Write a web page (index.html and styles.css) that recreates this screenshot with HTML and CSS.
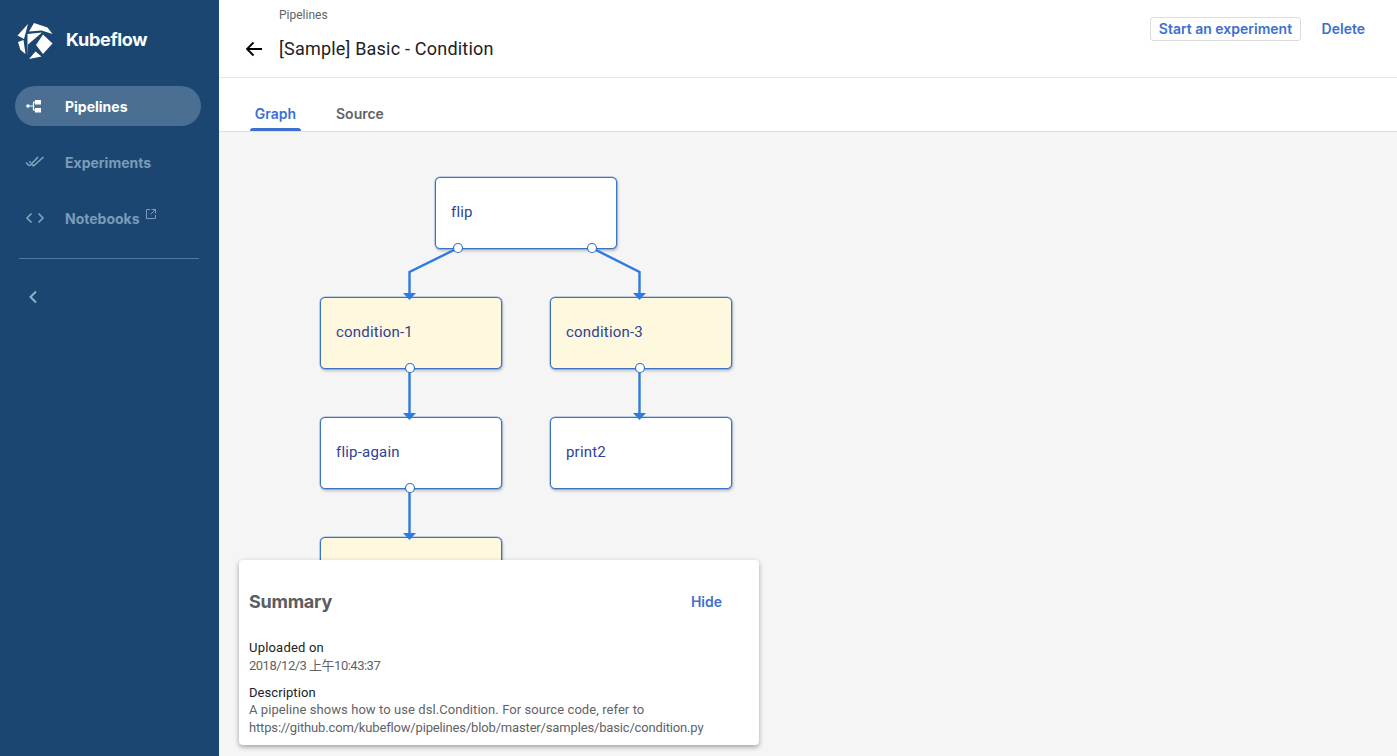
FILE: index.html
```html
<!DOCTYPE html>
<html lang="en">
<head>
<meta charset="utf-8">
<title>Kubeflow Pipelines</title>
<link rel="stylesheet" href="styles.css">
</head>
<body>
<div class="app">
  <aside class="sidebar">
    <div class="brand">
      <svg class="logo" viewBox="0 0 36 36" width="36" height="36">
        <path d="M11 1 0.500 12.500 7 16 Z"/>
        <path d="M17 0 30.500 4.500 35.500 11 24.500 7.500 12 8.500 Z"/>
        <path d="M10.500 11 25 9.500 11 21.500 10.500 33 Z"/>
        <path d="M1 19 6.500 17 8.500 31 3.500 27 Z"/>
        <path d="M26 11.500 35.500 20.500 26 31 19 22 Z"/>
        <path d="M12 36 18.500 28.500 24.500 33.500 Z"/>
      </svg>
      <span class="brand-name">Kubeflow</span>
    </div>
    <nav class="nav">
      <a class="nav-item active">
        <svg class="nav-icon" viewBox="0 0 18 18" width="18" height="18">
          <circle cx="3" cy="9" r="1.800"/>
          <rect x="10" y="3" width="6" height="4.500"/>
          <rect x="10" y="11" width="6" height="4.500"/>
          <path class="line" d="M5 9h3.500M8.500 5.200V13.200M8.500 5.200H10M8.500 13.200H10"/>
        </svg>
        <span>Pipelines</span>
      </a>
      <a class="nav-item">
        <svg class="nav-icon" viewBox="0 0 20 14" width="20" height="14">
          <path class="line" d="M1 7.500l3.500 3.500M5 10.500 13 2M8.500 11 18.500 2M7 9.500 8.500 11M4.300 6.200 5.800 7.700"/>
        </svg>
        <span>Experiments</span>
      </a>
      <a class="nav-item">
        <svg class="nav-icon" viewBox="0 0 20 14" width="20" height="14">
          <path class="line" d="M6.500 2.500 2 7l4.500 4.500M13.500 2.500 18 7l-4.500 4.500"/>
        </svg>
        <span>Notebooks</span>
        <svg class="ext" viewBox="0 0 10 10" width="10" height="10">
          <path d="M4 .5H.5v9h9V6M5.500 .5h4v4M9.500 .5 4.500 5.500"/>
        </svg>
      </a>
    </nav>
    <div class="divider"></div>
    <button class="collapse" aria-label="Collapse">
      <svg viewBox="0 0 10 14" width="10" height="14"><path d="M8 1.500 2.500 7 8 12.500"/></svg>
    </button>
  </aside>
  <main class="main">
    <header class="header">
      <div class="title-block">
        <div class="crumb">Pipelines</div>
        <div class="title-row">
          <svg class="back" viewBox="0 0 18 16" width="18" height="16"><path d="M17 8H2M8.500 1.500 2 8l6.500 6.500"/></svg>
          <h1 class="title">[Sample] Basic - Condition</h1>
        </div>
      </div>
      <div class="actions">
        <button class="btn outlined">Start an experiment</button>
        <button class="btn">Delete</button>
      </div>
    </header>
    <div class="tabs">
      <div class="tab selected">Graph</div>
      <div class="tab">Source</div>
    </div>
    <section class="canvas">
      <div class="node n-flip">flip</div>
      <div class="node cond n-c1">condition-1</div>
      <div class="node cond n-c3">condition-3</div>
      <div class="node n-again">flip-again</div>
      <div class="node n-print">print2</div>
      <div class="node cond n-c2"></div>
      <svg class="edges" width="1178" height="624" viewBox="0 0 1178 624">
        <g class="edge">
          <path d="M239 116 190.500 140V162"/>
          <path d="M373 116 420.500 140V162"/>
          <path d="M190.500 236V282"/>
          <path d="M420.500 236V282"/>
          <path d="M190.500 356V402"/>
        </g>
        <g class="head">
          <path d="M184 161h13L190.500 168Z"/>
          <path d="M414 161h13L420.500 168Z"/>
          <path d="M184 281h13L190.500 288Z"/>
          <path d="M414 281h13L420.500 288Z"/>
          <path d="M184 401h13L190.500 408Z"/>
        </g>
        <g class="port">
          <circle cx="239" cy="116" r="4.500"/>
          <circle cx="373" cy="116" r="4.500"/>
          <circle cx="191" cy="236" r="4.500"/>
          <circle cx="421" cy="236" r="4.500"/>
          <circle cx="191" cy="356" r="4.500"/>
        </g>
      </svg>
      <div class="summary">
        <div class="summary-head">
          <h2 class="summary-title">Summary</h2>
          <button class="btn hide">Hide</button>
        </div>
        <div class="label wide">Uploaded on</div>
        <div class="value date">2018/12/3 上午10:43:37</div>
        <div class="label second">Description</div>
        <div class="value desc"><span class="prose">A pipeline shows how to use dsl.Condition. For source code, refer to</span><br><span class="url">https://github.com/kubeflow/pipelines/blob/master/samples/basic/condition.py</span></div>
      </div>
    </section>
  </main>
</div>
</body>
</html>
```

FILE: styles.css
```css
* { box-sizing: border-box; }
html, body { margin: 0; height: 100%; overflow: hidden; }
body { font-family: Roboto, "Noto Sans CJK TC", sans-serif; color: #202124; background: #fff; }
button { font: inherit; background: none; border: 0; padding: 0; }

.app { display: flex; height: 756px; }

.sidebar { width: 219px; flex: none; background: #1a4671; display: flex; flex-direction: column; }
.brand { display: flex; align-items: center; height: 78px; padding: 3px 0 0 17px; }
.logo { fill: #fff; flex: none; }
.brand-name { margin: -2px 0 0 13px; color: #fff; font: 700 18px Inter, sans-serif; letter-spacing: -0.3px; }

.nav { display: flex; flex-direction: column; gap: 16px; padding: 8px 18px 0 15px; }
.nav-item { display: flex; align-items: center; height: 40px; border-radius: 20px; padding-left: 10px; color: #7a9cb9; font: 700 14px Inter, sans-serif; }
.nav-item.active { background: #4a6f92; color: #fff; }
.nav-icon { flex: none; margin-right: 20px; fill: #fff; }
.nav-item.active .nav-icon { margin-right: 22px; }
.nav-icon .line { fill: none; stroke: #86a7c2; stroke-width: 1.5; }
.nav-item.active .nav-icon .line { stroke: #fff; stroke-width: 1.2; }
.ext { margin: -8px 0 0 6px; fill: none; stroke: #7a9cb9; stroke-width: 1; }

.divider { height: 1px; margin: 20px 20px 0 19px; background: #4f79a3; }
.collapse { display: flex; padding: 31px 0 0 28px; }
.collapse svg { fill: none; stroke: #8fb0cc; stroke-width: 2; }

.main { flex: 1; min-width: 0; display: flex; flex-direction: column; }

.header { height: 78px; flex: none; display: flex; justify-content: space-between; border-bottom: 1px solid #e6e6e6; padding: 0 32px 0 26px; }
.crumb { margin-left: 34px; padding-top: 8px; font-size: 12px; line-height: 14px; color: #5f6368; }
.title-row { display: flex; align-items: center; margin-top: 12px; }
.back { fill: none; stroke: #000; stroke-width: 1.8; flex: none; }
.title { margin: 0 0 0 16px; font-size: 18px; font-weight: 400; line-height: 30px; letter-spacing: 0.21px; color: #202124; }
.actions { display: flex; align-items: flex-start; gap: 21px; padding-top: 17px; }
.btn { color: #3d6fd1; font: 600 14px Inter, sans-serif; line-height: 22px; }
.btn.outlined { border: 1px solid #dcdcdc; border-radius: 3px; padding: 0 7.5px; height: 24px; }
.actions .btn:last-child { padding-top: 1px; }

.tabs { height: 54px; flex: none; display: flex; align-items: flex-end; gap: 31px; padding-left: 31px; border-bottom: 1px solid #e0e0e0; }
.tab { position: relative; height: 36px; padding: 0 4px; color: #5f6368; font: 600 14px/38px Inter, sans-serif; }
.tab.selected { color: #3d6fd1; width: 51px; padding: 0; text-align: center; }
.tab.selected::after { content: ""; position: absolute; left: 0; right: 0; bottom: 0; height: 3px; background: #3d6fd1; border-radius: 3px 3px 0 0; }

.canvas { position: relative; flex: 1; background: #f5f5f5; overflow: hidden; }
.edges { position: absolute; left: 0; top: 0; }
.edge path { fill: none; stroke: #2f7ae0; stroke-width: 2.4; }
.head path { fill: #2f7ae0; }
.port circle { fill: #fff; stroke: #2f73cf; stroke-width: 1.2; }

.node { position: absolute; width: 182px; height: 72px; background: #fff; border: 1px solid #3873c4; border-radius: 5px; box-shadow: 0 0 0 0.5px rgba(56,115,196,.55), 1px 2px 3px rgba(0,0,0,.22); padding-left: 15px; line-height: 68px; font-size: 15px; letter-spacing: 0.2px; color: #2f4293; }
.cond { background: #fef8de; }
.n-flip { left: 216px; top: 45px; }
.n-c1 { left: 101px; top: 165px; }
.n-c3 { left: 331px; top: 165px; }
.n-again { left: 101px; top: 285px; }
.n-print { left: 331px; top: 285px; }
.n-c2 { left: 101px; top: 405px; }

.summary { position: absolute; left: 20px; top: 428px; width: 520px; height: 185px; padding: 0 10px; background: #fff; border-radius: 4px; box-shadow: 0 2px 5px rgba(0,0,0,.35); font-size: 13px; line-height: 18px; }
.summary-head { display: flex; justify-content: space-between; align-items: center; height: 79px; padding: 0 27px 0 0; }
.summary-title { margin: 4px 0 0; font: 700 18px Inter, sans-serif; color: #5a5d61; letter-spacing: -0.25px; }
.hide { margin-top: 5px; }
.label { color: #202124; font-size: 13px; }
.label.wide { letter-spacing: 0.2px; }
.label.second { margin-top: 9px; letter-spacing: 0.08px; }
.value { color: #5f6368; }
.date { letter-spacing: -0.5px; }
.desc { margin-top: -1px; }
.prose { letter-spacing: 0.07px; }
.url { letter-spacing: -0.16px; }
```
